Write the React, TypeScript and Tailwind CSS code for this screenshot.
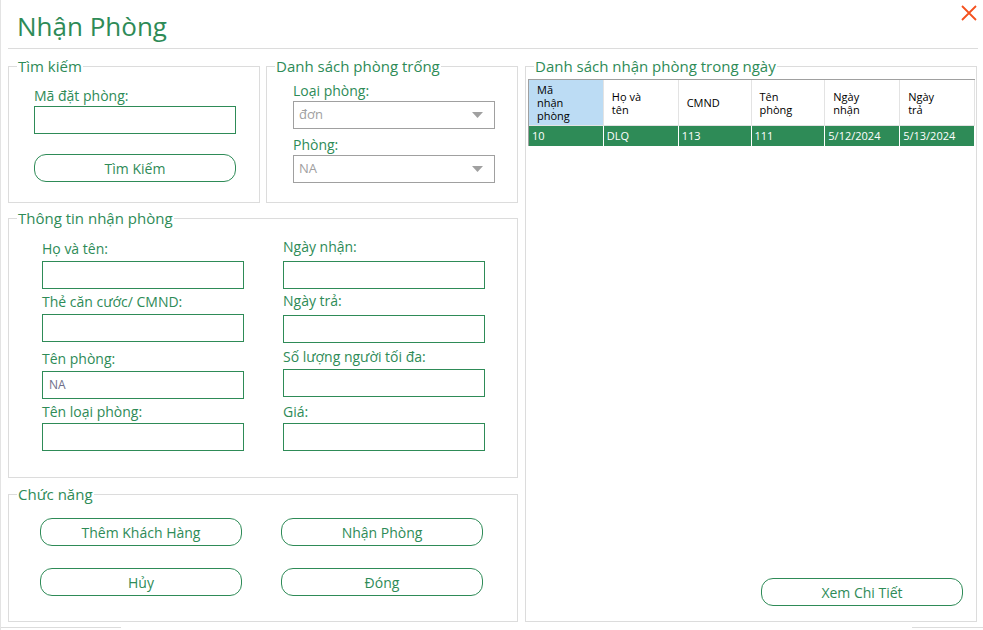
import React from "react";

const font = { fontFamily: '"Open Sans", "Noto Sans", sans-serif' };

const Group = ({
  title,
  className,
  children,
}: {
  title: string;
  className: string;
  children: React.ReactNode;
}) => (
  <fieldset className={`border border-[#dcdcdc] ${className}`}>
    <legend className="ml-[8px] px-[1px] text-[15px] leading-[18px] text-[#2e8b57]">
      {title}
    </legend>
    {children}
  </fieldset>
);

const Input = ({ value }: { value?: string }) => (
  <div className="flex h-[28px] w-[202px] items-center border border-[#2e8b57] bg-white px-[6px] text-[12px] text-[#6e6e8a]">
    {value}
  </div>
);

const Select = ({ value }: { value: string }) => (
  <div className="flex h-[28px] w-[202px] items-center justify-between border border-[#a0a0a0] bg-white pl-[5px] pr-[11px] text-[13px] text-[#a0a0a0]">
    <span>{value}</span>
    <svg width="11" height="6" viewBox="0 0 11 6">
      <path d="M0 0 H11 L5.5 6 Z" fill="#a0a0a0" />
    </svg>
  </div>
);

const Button = ({ label }: { label: string }) => (
  <button className="flex h-[28px] w-[202px] items-center justify-center rounded-[12px] border border-[#2e8b57] bg-white text-[14px] text-[#2e8b57]">
    {label}
  </button>
);

const Label = ({ text, className }: { text: string; className: string }) => (
  <div className={`text-[14px] leading-[20px] text-[#2e8b57] ${className}`}>{text}</div>
);

const cols = [
  { w: "w-[75px]", head: ["Mã", "nhận", "phòng"], val: "10" },
  { w: "w-[75px]", head: ["Họ và", "tên"], val: "DLQ" },
  { w: "w-[73px]", head: ["CMND"], val: "113" },
  { w: "w-[74px]", head: ["Tên", "phòng"], val: "111" },
  { w: "w-[75px]", head: ["Ngày", "nhận"], val: "5/12/2024" },
  { w: "w-[75px]", head: ["Ngày", "trả"], val: "5/13/2024" },
];

export default function App() {
  return (
    <div className="flex h-[630px] w-[983px] flex-col overflow-hidden border-l border-[#e3e3e3] bg-white" style={font}>
      {/* header */}
      <div className="ml-[7px] flex h-[49px] w-[970px] items-start justify-between border-b border-[#dcdcdc]">
        <h1 className="ml-[9px] mt-[9px] text-[26px] leading-[34px] text-[#2e8b57]">Nhận Phòng</h1>
        <svg className="mr-[1px] mt-[5px]" width="16" height="16" viewBox="0 0 16 16">
          <path d="M1 1 L15 15 M15 1 L1 15" stroke="#f4511e" strokeWidth="1.8" />
        </svg>
      </div>

      <div className="mt-[8px] flex h-[565px] gap-[6px] pl-[7px]">
        {/* left column */}
        <div className="flex w-[511px] flex-col">
          <div className="flex gap-[6px]">
            <Group title="Tìm kiếm" className="h-[146px] w-[252px]">
              <div className="pl-[25px] pt-[11px]">
                <Label text="Mã đặt phòng:" className="" />
                <Input />
                <div className="mt-[20px]">
                  <Button label="Tìm Kiếm" />
                </div>
              </div>
            </Group>
            <Group title="Danh sách phòng trống" className="h-[146px] w-[252px]">
              <div className="pl-[26px] pt-[6px]">
                <Label text="Loại phòng:" className="" />
                <Select value="đơn" />
                <Label text="Phòng:" className="mt-[6px]" />
                <Select value="NA" />
              </div>
            </Group>
          </div>

          <Group title="Thông tin nhận phòng" className="mt-[6px] h-[269px] w-[510px]">
            <div className="flex gap-[39px] pl-[33px]">
              <div className="flex flex-col">
                <Label text="Họ và tên:" className="mt-[12px] mb-[2px]" />
                <Input />
                <Label text="Thẻ căn cước/ CMND:" className="mt-[3px] mb-[2px]" />
                <Input />
                <Label text="Tên phòng:" className="mt-[7px] mb-[2px]" />
                <Input value="NA" />
                <Label text="Tên loại phòng:" className="mt-[3px] mb-[1px]" />
                <Input />
              </div>
              <div className="flex flex-col">
                <Label text="Ngày nhận:" className="mt-[10px] mb-[4px]" />
                <Input />
                <Label text="Ngày trả:" className="mt-[2px] mb-[4px]" />
                <Input />
                <Label text="Số lượng người tối đa:" className="mt-[4px] mb-[2px]" />
                <Input />
                <Label text="Giá:" className="mt-[5px] mb-[1px]" />
                <Input />
              </div>
            </div>
          </Group>

          <Group title="Chức năng" className="mt-[7px] h-[137px] w-[510px]">
            <div className="grid grid-cols-[202px_202px] gap-x-[39px] gap-y-[22px] pl-[31px] pt-[15px]">
              <Button label="Thêm Khách Hàng" />
              <Button label="Nhận Phòng" />
              <Button label="Hủy" />
              <Button label="Đóng" />
            </div>
          </Group>
        </div>

        {/* right column */}
        <Group title="Danh sách nhận phòng trong ngày" className="flex h-[565px] w-[452px] flex-col">
          <div className="ml-[2px] mt-[4px] w-[447px] border-l border-t border-[#a0a0a0]">
            <div className="flex h-[46px] border-b border-[#e3e3e3]">
              {cols.map((c, i) => (
                <div
                  key={i}
                  className={`${c.w} flex flex-col justify-center border-r border-[#e3e3e3] pl-[8px] text-[11px] leading-[13px] text-black ${i === 0 ? "bg-[#bcdcf4]" : "bg-white"}`}
                >
                  {c.head.map((h) => (
                    <span key={h}>{h}</span>
                  ))}
                </div>
              ))}
            </div>
            <div className="flex h-[20px] bg-[#2e8b57]">
              {cols.map((c, i) => (
                <div key={i} className={`${c.w} flex items-center border-r border-white pl-[3px] text-[11px] text-white`}>
                  {c.val}
                </div>
              ))}
            </div>
          </div>
          <div className="mb-[15px] mr-[13px] mt-auto flex justify-end">
            <Button label="Xem Chi Tiết" />
          </div>
        </Group>
      </div>

      <div className="mt-[5px] flex justify-between">
        <div className="h-[1px] w-[120px] bg-[#dcdcdc]" />
        <div className="h-[1px] w-[71px] bg-[#dcdcdc]" />
      </div>
    </div>
  );
}
